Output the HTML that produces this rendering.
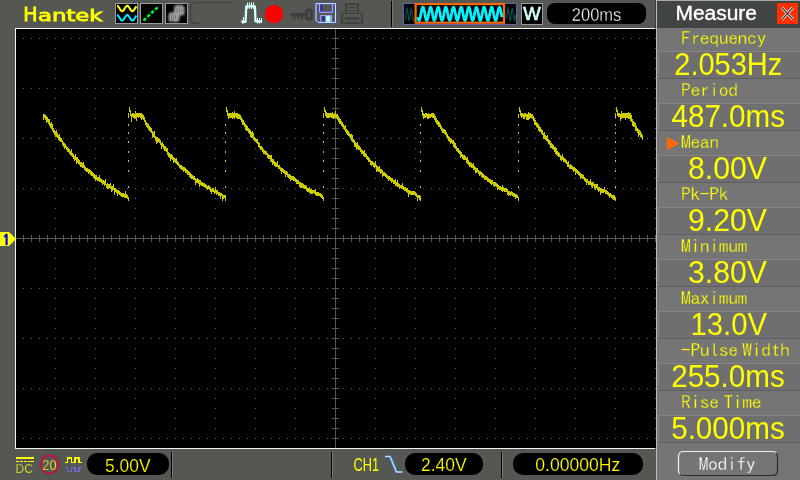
<!DOCTYPE html>
<html><head><meta charset="utf-8"><title>Hantek Measure</title>
<style>html,body{margin:0;padding:0;background:#555753;width:800px;height:480px;overflow:hidden}svg{display:block}.v{font-family:"Liberation Sans",Arial,sans-serif;fill:#ffff00}.l{font-family:"IPAGothic","WenQuanYi Zen Hei Mono","Liberation Mono",monospace;fill:#ffff00}</style></head><body>
<svg width="800" height="480" viewBox="0 0 800 480">
<rect x="0" y="0" width="800" height="480" fill="#555753"/>
<g shape-rendering="crispEdges">
<rect x="15" y="28" width="640" height="421" fill="#f0f2ef"/><rect x="655" y="0" width="1" height="28" fill="#3a3c39"/>
<rect x="16" y="29" width="640" height="419" fill="#000"/>
<path d="M23 38h1v1h-1zM23 88h1v1h-1zM23 138h1v1h-1zM23 188h1v1h-1zM23 288h1v1h-1zM23 338h1v1h-1zM23 388h1v1h-1zM23 438h1v1h-1zM31 38h1v1h-1zM31 88h1v1h-1zM31 138h1v1h-1zM31 188h1v1h-1zM31 288h1v1h-1zM31 338h1v1h-1zM31 388h1v1h-1zM31 438h1v1h-1zM39 38h1v1h-1zM39 88h1v1h-1zM39 138h1v1h-1zM39 188h1v1h-1zM39 288h1v1h-1zM39 338h1v1h-1zM39 388h1v1h-1zM39 438h1v1h-1zM47 38h1v1h-1zM47 88h1v1h-1zM47 138h1v1h-1zM47 188h1v1h-1zM47 288h1v1h-1zM47 338h1v1h-1zM47 388h1v1h-1zM47 438h1v1h-1zM55 38h1v1h-1zM55 48h1v1h-1zM55 58h1v1h-1zM55 68h1v1h-1zM55 78h1v1h-1zM55 88h1v1h-1zM55 98h1v1h-1zM55 108h1v1h-1zM55 118h1v1h-1zM55 128h1v1h-1zM55 138h1v1h-1zM55 148h1v1h-1zM55 158h1v1h-1zM55 168h1v1h-1zM55 178h1v1h-1zM55 188h1v1h-1zM55 198h1v1h-1zM55 208h1v1h-1zM55 218h1v1h-1zM55 228h1v1h-1zM55 238h1v1h-1zM55 248h1v1h-1zM55 258h1v1h-1zM55 268h1v1h-1zM55 278h1v1h-1zM55 288h1v1h-1zM55 298h1v1h-1zM55 308h1v1h-1zM55 318h1v1h-1zM55 328h1v1h-1zM55 338h1v1h-1zM55 348h1v1h-1zM55 358h1v1h-1zM55 368h1v1h-1zM55 378h1v1h-1zM55 388h1v1h-1zM55 398h1v1h-1zM55 408h1v1h-1zM55 418h1v1h-1zM55 428h1v1h-1zM55 438h1v1h-1zM63 38h1v1h-1zM63 88h1v1h-1zM63 138h1v1h-1zM63 188h1v1h-1zM63 288h1v1h-1zM63 338h1v1h-1zM63 388h1v1h-1zM63 438h1v1h-1zM71 38h1v1h-1zM71 88h1v1h-1zM71 138h1v1h-1zM71 188h1v1h-1zM71 288h1v1h-1zM71 338h1v1h-1zM71 388h1v1h-1zM71 438h1v1h-1zM79 38h1v1h-1zM79 88h1v1h-1zM79 138h1v1h-1zM79 188h1v1h-1zM79 288h1v1h-1zM79 338h1v1h-1zM79 388h1v1h-1zM79 438h1v1h-1zM87 38h1v1h-1zM87 88h1v1h-1zM87 138h1v1h-1zM87 188h1v1h-1zM87 288h1v1h-1zM87 338h1v1h-1zM87 388h1v1h-1zM87 438h1v1h-1zM95 38h1v1h-1zM95 48h1v1h-1zM95 58h1v1h-1zM95 68h1v1h-1zM95 78h1v1h-1zM95 88h1v1h-1zM95 98h1v1h-1zM95 108h1v1h-1zM95 118h1v1h-1zM95 128h1v1h-1zM95 138h1v1h-1zM95 148h1v1h-1zM95 158h1v1h-1zM95 168h1v1h-1zM95 178h1v1h-1zM95 188h1v1h-1zM95 198h1v1h-1zM95 208h1v1h-1zM95 218h1v1h-1zM95 228h1v1h-1zM95 238h1v1h-1zM95 248h1v1h-1zM95 258h1v1h-1zM95 268h1v1h-1zM95 278h1v1h-1zM95 288h1v1h-1zM95 298h1v1h-1zM95 308h1v1h-1zM95 318h1v1h-1zM95 328h1v1h-1zM95 338h1v1h-1zM95 348h1v1h-1zM95 358h1v1h-1zM95 368h1v1h-1zM95 378h1v1h-1zM95 388h1v1h-1zM95 398h1v1h-1zM95 408h1v1h-1zM95 418h1v1h-1zM95 428h1v1h-1zM95 438h1v1h-1zM103 38h1v1h-1zM103 88h1v1h-1zM103 138h1v1h-1zM103 188h1v1h-1zM103 288h1v1h-1zM103 338h1v1h-1zM103 388h1v1h-1zM103 438h1v1h-1zM111 38h1v1h-1zM111 88h1v1h-1zM111 138h1v1h-1zM111 188h1v1h-1zM111 288h1v1h-1zM111 338h1v1h-1zM111 388h1v1h-1zM111 438h1v1h-1zM119 38h1v1h-1zM119 88h1v1h-1zM119 138h1v1h-1zM119 188h1v1h-1zM119 288h1v1h-1zM119 338h1v1h-1zM119 388h1v1h-1zM119 438h1v1h-1zM127 38h1v1h-1zM127 88h1v1h-1zM127 138h1v1h-1zM127 188h1v1h-1zM127 288h1v1h-1zM127 338h1v1h-1zM127 388h1v1h-1zM127 438h1v1h-1zM135 38h1v1h-1zM135 48h1v1h-1zM135 58h1v1h-1zM135 68h1v1h-1zM135 78h1v1h-1zM135 88h1v1h-1zM135 98h1v1h-1zM135 108h1v1h-1zM135 118h1v1h-1zM135 128h1v1h-1zM135 138h1v1h-1zM135 148h1v1h-1zM135 158h1v1h-1zM135 168h1v1h-1zM135 178h1v1h-1zM135 188h1v1h-1zM135 198h1v1h-1zM135 208h1v1h-1zM135 218h1v1h-1zM135 228h1v1h-1zM135 238h1v1h-1zM135 248h1v1h-1zM135 258h1v1h-1zM135 268h1v1h-1zM135 278h1v1h-1zM135 288h1v1h-1zM135 298h1v1h-1zM135 308h1v1h-1zM135 318h1v1h-1zM135 328h1v1h-1zM135 338h1v1h-1zM135 348h1v1h-1zM135 358h1v1h-1zM135 368h1v1h-1zM135 378h1v1h-1zM135 388h1v1h-1zM135 398h1v1h-1zM135 408h1v1h-1zM135 418h1v1h-1zM135 428h1v1h-1zM135 438h1v1h-1zM143 38h1v1h-1zM143 88h1v1h-1zM143 138h1v1h-1zM143 188h1v1h-1zM143 288h1v1h-1zM143 338h1v1h-1zM143 388h1v1h-1zM143 438h1v1h-1zM151 38h1v1h-1zM151 88h1v1h-1zM151 138h1v1h-1zM151 188h1v1h-1zM151 288h1v1h-1zM151 338h1v1h-1zM151 388h1v1h-1zM151 438h1v1h-1zM159 38h1v1h-1zM159 88h1v1h-1zM159 138h1v1h-1zM159 188h1v1h-1zM159 288h1v1h-1zM159 338h1v1h-1zM159 388h1v1h-1zM159 438h1v1h-1zM167 38h1v1h-1zM167 88h1v1h-1zM167 138h1v1h-1zM167 188h1v1h-1zM167 288h1v1h-1zM167 338h1v1h-1zM167 388h1v1h-1zM167 438h1v1h-1zM175 38h1v1h-1zM175 48h1v1h-1zM175 58h1v1h-1zM175 68h1v1h-1zM175 78h1v1h-1zM175 88h1v1h-1zM175 98h1v1h-1zM175 108h1v1h-1zM175 118h1v1h-1zM175 128h1v1h-1zM175 138h1v1h-1zM175 148h1v1h-1zM175 158h1v1h-1zM175 168h1v1h-1zM175 178h1v1h-1zM175 188h1v1h-1zM175 198h1v1h-1zM175 208h1v1h-1zM175 218h1v1h-1zM175 228h1v1h-1zM175 238h1v1h-1zM175 248h1v1h-1zM175 258h1v1h-1zM175 268h1v1h-1zM175 278h1v1h-1zM175 288h1v1h-1zM175 298h1v1h-1zM175 308h1v1h-1zM175 318h1v1h-1zM175 328h1v1h-1zM175 338h1v1h-1zM175 348h1v1h-1zM175 358h1v1h-1zM175 368h1v1h-1zM175 378h1v1h-1zM175 388h1v1h-1zM175 398h1v1h-1zM175 408h1v1h-1zM175 418h1v1h-1zM175 428h1v1h-1zM175 438h1v1h-1zM183 38h1v1h-1zM183 88h1v1h-1zM183 138h1v1h-1zM183 188h1v1h-1zM183 288h1v1h-1zM183 338h1v1h-1zM183 388h1v1h-1zM183 438h1v1h-1zM191 38h1v1h-1zM191 88h1v1h-1zM191 138h1v1h-1zM191 188h1v1h-1zM191 288h1v1h-1zM191 338h1v1h-1zM191 388h1v1h-1zM191 438h1v1h-1zM199 38h1v1h-1zM199 88h1v1h-1zM199 138h1v1h-1zM199 188h1v1h-1zM199 288h1v1h-1zM199 338h1v1h-1zM199 388h1v1h-1zM199 438h1v1h-1zM207 38h1v1h-1zM207 88h1v1h-1zM207 138h1v1h-1zM207 188h1v1h-1zM207 288h1v1h-1zM207 338h1v1h-1zM207 388h1v1h-1zM207 438h1v1h-1zM215 38h1v1h-1zM215 48h1v1h-1zM215 58h1v1h-1zM215 68h1v1h-1zM215 78h1v1h-1zM215 88h1v1h-1zM215 98h1v1h-1zM215 108h1v1h-1zM215 118h1v1h-1zM215 128h1v1h-1zM215 138h1v1h-1zM215 148h1v1h-1zM215 158h1v1h-1zM215 168h1v1h-1zM215 178h1v1h-1zM215 188h1v1h-1zM215 198h1v1h-1zM215 208h1v1h-1zM215 218h1v1h-1zM215 228h1v1h-1zM215 238h1v1h-1zM215 248h1v1h-1zM215 258h1v1h-1zM215 268h1v1h-1zM215 278h1v1h-1zM215 288h1v1h-1zM215 298h1v1h-1zM215 308h1v1h-1zM215 318h1v1h-1zM215 328h1v1h-1zM215 338h1v1h-1zM215 348h1v1h-1zM215 358h1v1h-1zM215 368h1v1h-1zM215 378h1v1h-1zM215 388h1v1h-1zM215 398h1v1h-1zM215 408h1v1h-1zM215 418h1v1h-1zM215 428h1v1h-1zM215 438h1v1h-1zM223 38h1v1h-1zM223 88h1v1h-1zM223 138h1v1h-1zM223 188h1v1h-1zM223 288h1v1h-1zM223 338h1v1h-1zM223 388h1v1h-1zM223 438h1v1h-1zM231 38h1v1h-1zM231 88h1v1h-1zM231 138h1v1h-1zM231 188h1v1h-1zM231 288h1v1h-1zM231 338h1v1h-1zM231 388h1v1h-1zM231 438h1v1h-1zM239 38h1v1h-1zM239 88h1v1h-1zM239 138h1v1h-1zM239 188h1v1h-1zM239 288h1v1h-1zM239 338h1v1h-1zM239 388h1v1h-1zM239 438h1v1h-1zM247 38h1v1h-1zM247 88h1v1h-1zM247 138h1v1h-1zM247 188h1v1h-1zM247 288h1v1h-1zM247 338h1v1h-1zM247 388h1v1h-1zM247 438h1v1h-1zM255 38h1v1h-1zM255 48h1v1h-1zM255 58h1v1h-1zM255 68h1v1h-1zM255 78h1v1h-1zM255 88h1v1h-1zM255 98h1v1h-1zM255 108h1v1h-1zM255 118h1v1h-1zM255 128h1v1h-1zM255 138h1v1h-1zM255 148h1v1h-1zM255 158h1v1h-1zM255 168h1v1h-1zM255 178h1v1h-1zM255 188h1v1h-1zM255 198h1v1h-1zM255 208h1v1h-1zM255 218h1v1h-1zM255 228h1v1h-1zM255 238h1v1h-1zM255 248h1v1h-1zM255 258h1v1h-1zM255 268h1v1h-1zM255 278h1v1h-1zM255 288h1v1h-1zM255 298h1v1h-1zM255 308h1v1h-1zM255 318h1v1h-1zM255 328h1v1h-1zM255 338h1v1h-1zM255 348h1v1h-1zM255 358h1v1h-1zM255 368h1v1h-1zM255 378h1v1h-1zM255 388h1v1h-1zM255 398h1v1h-1zM255 408h1v1h-1zM255 418h1v1h-1zM255 428h1v1h-1zM255 438h1v1h-1zM263 38h1v1h-1zM263 88h1v1h-1zM263 138h1v1h-1zM263 188h1v1h-1zM263 288h1v1h-1zM263 338h1v1h-1zM263 388h1v1h-1zM263 438h1v1h-1zM271 38h1v1h-1zM271 88h1v1h-1zM271 138h1v1h-1zM271 188h1v1h-1zM271 288h1v1h-1zM271 338h1v1h-1zM271 388h1v1h-1zM271 438h1v1h-1zM279 38h1v1h-1zM279 88h1v1h-1zM279 138h1v1h-1zM279 188h1v1h-1zM279 288h1v1h-1zM279 338h1v1h-1zM279 388h1v1h-1zM279 438h1v1h-1zM287 38h1v1h-1zM287 88h1v1h-1zM287 138h1v1h-1zM287 188h1v1h-1zM287 288h1v1h-1zM287 338h1v1h-1zM287 388h1v1h-1zM287 438h1v1h-1zM295 38h1v1h-1zM295 48h1v1h-1zM295 58h1v1h-1zM295 68h1v1h-1zM295 78h1v1h-1zM295 88h1v1h-1zM295 98h1v1h-1zM295 108h1v1h-1zM295 118h1v1h-1zM295 128h1v1h-1zM295 138h1v1h-1zM295 148h1v1h-1zM295 158h1v1h-1zM295 168h1v1h-1zM295 178h1v1h-1zM295 188h1v1h-1zM295 198h1v1h-1zM295 208h1v1h-1zM295 218h1v1h-1zM295 228h1v1h-1zM295 238h1v1h-1zM295 248h1v1h-1zM295 258h1v1h-1zM295 268h1v1h-1zM295 278h1v1h-1zM295 288h1v1h-1zM295 298h1v1h-1zM295 308h1v1h-1zM295 318h1v1h-1zM295 328h1v1h-1zM295 338h1v1h-1zM295 348h1v1h-1zM295 358h1v1h-1zM295 368h1v1h-1zM295 378h1v1h-1zM295 388h1v1h-1zM295 398h1v1h-1zM295 408h1v1h-1zM295 418h1v1h-1zM295 428h1v1h-1zM295 438h1v1h-1zM303 38h1v1h-1zM303 88h1v1h-1zM303 138h1v1h-1zM303 188h1v1h-1zM303 288h1v1h-1zM303 338h1v1h-1zM303 388h1v1h-1zM303 438h1v1h-1zM311 38h1v1h-1zM311 88h1v1h-1zM311 138h1v1h-1zM311 188h1v1h-1zM311 288h1v1h-1zM311 338h1v1h-1zM311 388h1v1h-1zM311 438h1v1h-1zM319 38h1v1h-1zM319 88h1v1h-1zM319 138h1v1h-1zM319 188h1v1h-1zM319 288h1v1h-1zM319 338h1v1h-1zM319 388h1v1h-1zM319 438h1v1h-1zM327 38h1v1h-1zM327 88h1v1h-1zM327 138h1v1h-1zM327 188h1v1h-1zM327 288h1v1h-1zM327 338h1v1h-1zM327 388h1v1h-1zM327 438h1v1h-1zM335 38h1v1h-1zM335 88h1v1h-1zM335 138h1v1h-1zM335 188h1v1h-1zM335 288h1v1h-1zM335 338h1v1h-1zM335 388h1v1h-1zM335 438h1v1h-1zM343 38h1v1h-1zM343 88h1v1h-1zM343 138h1v1h-1zM343 188h1v1h-1zM343 288h1v1h-1zM343 338h1v1h-1zM343 388h1v1h-1zM343 438h1v1h-1zM351 38h1v1h-1zM351 88h1v1h-1zM351 138h1v1h-1zM351 188h1v1h-1zM351 288h1v1h-1zM351 338h1v1h-1zM351 388h1v1h-1zM351 438h1v1h-1zM359 38h1v1h-1zM359 88h1v1h-1zM359 138h1v1h-1zM359 188h1v1h-1zM359 288h1v1h-1zM359 338h1v1h-1zM359 388h1v1h-1zM359 438h1v1h-1zM367 38h1v1h-1zM367 88h1v1h-1zM367 138h1v1h-1zM367 188h1v1h-1zM367 288h1v1h-1zM367 338h1v1h-1zM367 388h1v1h-1zM367 438h1v1h-1zM375 38h1v1h-1zM375 48h1v1h-1zM375 58h1v1h-1zM375 68h1v1h-1zM375 78h1v1h-1zM375 88h1v1h-1zM375 98h1v1h-1zM375 108h1v1h-1zM375 118h1v1h-1zM375 128h1v1h-1zM375 138h1v1h-1zM375 148h1v1h-1zM375 158h1v1h-1zM375 168h1v1h-1zM375 178h1v1h-1zM375 188h1v1h-1zM375 198h1v1h-1zM375 208h1v1h-1zM375 218h1v1h-1zM375 228h1v1h-1zM375 238h1v1h-1zM375 248h1v1h-1zM375 258h1v1h-1zM375 268h1v1h-1zM375 278h1v1h-1zM375 288h1v1h-1zM375 298h1v1h-1zM375 308h1v1h-1zM375 318h1v1h-1zM375 328h1v1h-1zM375 338h1v1h-1zM375 348h1v1h-1zM375 358h1v1h-1zM375 368h1v1h-1zM375 378h1v1h-1zM375 388h1v1h-1zM375 398h1v1h-1zM375 408h1v1h-1zM375 418h1v1h-1zM375 428h1v1h-1zM375 438h1v1h-1zM383 38h1v1h-1zM383 88h1v1h-1zM383 138h1v1h-1zM383 188h1v1h-1zM383 288h1v1h-1zM383 338h1v1h-1zM383 388h1v1h-1zM383 438h1v1h-1zM391 38h1v1h-1zM391 88h1v1h-1zM391 138h1v1h-1zM391 188h1v1h-1zM391 288h1v1h-1zM391 338h1v1h-1zM391 388h1v1h-1zM391 438h1v1h-1zM399 38h1v1h-1zM399 88h1v1h-1zM399 138h1v1h-1zM399 188h1v1h-1zM399 288h1v1h-1zM399 338h1v1h-1zM399 388h1v1h-1zM399 438h1v1h-1zM407 38h1v1h-1zM407 88h1v1h-1zM407 138h1v1h-1zM407 188h1v1h-1zM407 288h1v1h-1zM407 338h1v1h-1zM407 388h1v1h-1zM407 438h1v1h-1zM415 38h1v1h-1zM415 48h1v1h-1zM415 58h1v1h-1zM415 68h1v1h-1zM415 78h1v1h-1zM415 88h1v1h-1zM415 98h1v1h-1zM415 108h1v1h-1zM415 118h1v1h-1zM415 128h1v1h-1zM415 138h1v1h-1zM415 148h1v1h-1zM415 158h1v1h-1zM415 168h1v1h-1zM415 178h1v1h-1zM415 188h1v1h-1zM415 198h1v1h-1zM415 208h1v1h-1zM415 218h1v1h-1zM415 228h1v1h-1zM415 238h1v1h-1zM415 248h1v1h-1zM415 258h1v1h-1zM415 268h1v1h-1zM415 278h1v1h-1zM415 288h1v1h-1zM415 298h1v1h-1zM415 308h1v1h-1zM415 318h1v1h-1zM415 328h1v1h-1zM415 338h1v1h-1zM415 348h1v1h-1zM415 358h1v1h-1zM415 368h1v1h-1zM415 378h1v1h-1zM415 388h1v1h-1zM415 398h1v1h-1zM415 408h1v1h-1zM415 418h1v1h-1zM415 428h1v1h-1zM415 438h1v1h-1zM423 38h1v1h-1zM423 88h1v1h-1zM423 138h1v1h-1zM423 188h1v1h-1zM423 288h1v1h-1zM423 338h1v1h-1zM423 388h1v1h-1zM423 438h1v1h-1zM431 38h1v1h-1zM431 88h1v1h-1zM431 138h1v1h-1zM431 188h1v1h-1zM431 288h1v1h-1zM431 338h1v1h-1zM431 388h1v1h-1zM431 438h1v1h-1zM439 38h1v1h-1zM439 88h1v1h-1zM439 138h1v1h-1zM439 188h1v1h-1zM439 288h1v1h-1zM439 338h1v1h-1zM439 388h1v1h-1zM439 438h1v1h-1zM447 38h1v1h-1zM447 88h1v1h-1zM447 138h1v1h-1zM447 188h1v1h-1zM447 288h1v1h-1zM447 338h1v1h-1zM447 388h1v1h-1zM447 438h1v1h-1zM455 38h1v1h-1zM455 48h1v1h-1zM455 58h1v1h-1zM455 68h1v1h-1zM455 78h1v1h-1zM455 88h1v1h-1zM455 98h1v1h-1zM455 108h1v1h-1zM455 118h1v1h-1zM455 128h1v1h-1zM455 138h1v1h-1zM455 148h1v1h-1zM455 158h1v1h-1zM455 168h1v1h-1zM455 178h1v1h-1zM455 188h1v1h-1zM455 198h1v1h-1zM455 208h1v1h-1zM455 218h1v1h-1zM455 228h1v1h-1zM455 238h1v1h-1zM455 248h1v1h-1zM455 258h1v1h-1zM455 268h1v1h-1zM455 278h1v1h-1zM455 288h1v1h-1zM455 298h1v1h-1zM455 308h1v1h-1zM455 318h1v1h-1zM455 328h1v1h-1zM455 338h1v1h-1zM455 348h1v1h-1zM455 358h1v1h-1zM455 368h1v1h-1zM455 378h1v1h-1zM455 388h1v1h-1zM455 398h1v1h-1zM455 408h1v1h-1zM455 418h1v1h-1zM455 428h1v1h-1zM455 438h1v1h-1zM463 38h1v1h-1zM463 88h1v1h-1zM463 138h1v1h-1zM463 188h1v1h-1zM463 288h1v1h-1zM463 338h1v1h-1zM463 388h1v1h-1zM463 438h1v1h-1zM471 38h1v1h-1zM471 88h1v1h-1zM471 138h1v1h-1zM471 188h1v1h-1zM471 288h1v1h-1zM471 338h1v1h-1zM471 388h1v1h-1zM471 438h1v1h-1zM479 38h1v1h-1zM479 88h1v1h-1zM479 138h1v1h-1zM479 188h1v1h-1zM479 288h1v1h-1zM479 338h1v1h-1zM479 388h1v1h-1zM479 438h1v1h-1zM487 38h1v1h-1zM487 88h1v1h-1zM487 138h1v1h-1zM487 188h1v1h-1zM487 288h1v1h-1zM487 338h1v1h-1zM487 388h1v1h-1zM487 438h1v1h-1zM495 38h1v1h-1zM495 48h1v1h-1zM495 58h1v1h-1zM495 68h1v1h-1zM495 78h1v1h-1zM495 88h1v1h-1zM495 98h1v1h-1zM495 108h1v1h-1zM495 118h1v1h-1zM495 128h1v1h-1zM495 138h1v1h-1zM495 148h1v1h-1zM495 158h1v1h-1zM495 168h1v1h-1zM495 178h1v1h-1zM495 188h1v1h-1zM495 198h1v1h-1zM495 208h1v1h-1zM495 218h1v1h-1zM495 228h1v1h-1zM495 238h1v1h-1zM495 248h1v1h-1zM495 258h1v1h-1zM495 268h1v1h-1zM495 278h1v1h-1zM495 288h1v1h-1zM495 298h1v1h-1zM495 308h1v1h-1zM495 318h1v1h-1zM495 328h1v1h-1zM495 338h1v1h-1zM495 348h1v1h-1zM495 358h1v1h-1zM495 368h1v1h-1zM495 378h1v1h-1zM495 388h1v1h-1zM495 398h1v1h-1zM495 408h1v1h-1zM495 418h1v1h-1zM495 428h1v1h-1zM495 438h1v1h-1zM503 38h1v1h-1zM503 88h1v1h-1zM503 138h1v1h-1zM503 188h1v1h-1zM503 288h1v1h-1zM503 338h1v1h-1zM503 388h1v1h-1zM503 438h1v1h-1zM511 38h1v1h-1zM511 88h1v1h-1zM511 138h1v1h-1zM511 188h1v1h-1zM511 288h1v1h-1zM511 338h1v1h-1zM511 388h1v1h-1zM511 438h1v1h-1zM519 38h1v1h-1zM519 88h1v1h-1zM519 138h1v1h-1zM519 188h1v1h-1zM519 288h1v1h-1zM519 338h1v1h-1zM519 388h1v1h-1zM519 438h1v1h-1zM527 38h1v1h-1zM527 88h1v1h-1zM527 138h1v1h-1zM527 188h1v1h-1zM527 288h1v1h-1zM527 338h1v1h-1zM527 388h1v1h-1zM527 438h1v1h-1zM535 38h1v1h-1zM535 48h1v1h-1zM535 58h1v1h-1zM535 68h1v1h-1zM535 78h1v1h-1zM535 88h1v1h-1zM535 98h1v1h-1zM535 108h1v1h-1zM535 118h1v1h-1zM535 128h1v1h-1zM535 138h1v1h-1zM535 148h1v1h-1zM535 158h1v1h-1zM535 168h1v1h-1zM535 178h1v1h-1zM535 188h1v1h-1zM535 198h1v1h-1zM535 208h1v1h-1zM535 218h1v1h-1zM535 228h1v1h-1zM535 238h1v1h-1zM535 248h1v1h-1zM535 258h1v1h-1zM535 268h1v1h-1zM535 278h1v1h-1zM535 288h1v1h-1zM535 298h1v1h-1zM535 308h1v1h-1zM535 318h1v1h-1zM535 328h1v1h-1zM535 338h1v1h-1zM535 348h1v1h-1zM535 358h1v1h-1zM535 368h1v1h-1zM535 378h1v1h-1zM535 388h1v1h-1zM535 398h1v1h-1zM535 408h1v1h-1zM535 418h1v1h-1zM535 428h1v1h-1zM535 438h1v1h-1zM543 38h1v1h-1zM543 88h1v1h-1zM543 138h1v1h-1zM543 188h1v1h-1zM543 288h1v1h-1zM543 338h1v1h-1zM543 388h1v1h-1zM543 438h1v1h-1zM551 38h1v1h-1zM551 88h1v1h-1zM551 138h1v1h-1zM551 188h1v1h-1zM551 288h1v1h-1zM551 338h1v1h-1zM551 388h1v1h-1zM551 438h1v1h-1zM559 38h1v1h-1zM559 88h1v1h-1zM559 138h1v1h-1zM559 188h1v1h-1zM559 288h1v1h-1zM559 338h1v1h-1zM559 388h1v1h-1zM559 438h1v1h-1zM567 38h1v1h-1zM567 88h1v1h-1zM567 138h1v1h-1zM567 188h1v1h-1zM567 288h1v1h-1zM567 338h1v1h-1zM567 388h1v1h-1zM567 438h1v1h-1zM575 38h1v1h-1zM575 48h1v1h-1zM575 58h1v1h-1zM575 68h1v1h-1zM575 78h1v1h-1zM575 88h1v1h-1zM575 98h1v1h-1zM575 108h1v1h-1zM575 118h1v1h-1zM575 128h1v1h-1zM575 138h1v1h-1zM575 148h1v1h-1zM575 158h1v1h-1zM575 168h1v1h-1zM575 178h1v1h-1zM575 188h1v1h-1zM575 198h1v1h-1zM575 208h1v1h-1zM575 218h1v1h-1zM575 228h1v1h-1zM575 238h1v1h-1zM575 248h1v1h-1zM575 258h1v1h-1zM575 268h1v1h-1zM575 278h1v1h-1zM575 288h1v1h-1zM575 298h1v1h-1zM575 308h1v1h-1zM575 318h1v1h-1zM575 328h1v1h-1zM575 338h1v1h-1zM575 348h1v1h-1zM575 358h1v1h-1zM575 368h1v1h-1zM575 378h1v1h-1zM575 388h1v1h-1zM575 398h1v1h-1zM575 408h1v1h-1zM575 418h1v1h-1zM575 428h1v1h-1zM575 438h1v1h-1zM583 38h1v1h-1zM583 88h1v1h-1zM583 138h1v1h-1zM583 188h1v1h-1zM583 288h1v1h-1zM583 338h1v1h-1zM583 388h1v1h-1zM583 438h1v1h-1zM591 38h1v1h-1zM591 88h1v1h-1zM591 138h1v1h-1zM591 188h1v1h-1zM591 288h1v1h-1zM591 338h1v1h-1zM591 388h1v1h-1zM591 438h1v1h-1zM599 38h1v1h-1zM599 88h1v1h-1zM599 138h1v1h-1zM599 188h1v1h-1zM599 288h1v1h-1zM599 338h1v1h-1zM599 388h1v1h-1zM599 438h1v1h-1zM607 38h1v1h-1zM607 88h1v1h-1zM607 138h1v1h-1zM607 188h1v1h-1zM607 288h1v1h-1zM607 338h1v1h-1zM607 388h1v1h-1zM607 438h1v1h-1zM615 38h1v1h-1zM615 48h1v1h-1zM615 58h1v1h-1zM615 68h1v1h-1zM615 78h1v1h-1zM615 88h1v1h-1zM615 98h1v1h-1zM615 108h1v1h-1zM615 118h1v1h-1zM615 128h1v1h-1zM615 138h1v1h-1zM615 148h1v1h-1zM615 158h1v1h-1zM615 168h1v1h-1zM615 178h1v1h-1zM615 188h1v1h-1zM615 198h1v1h-1zM615 208h1v1h-1zM615 218h1v1h-1zM615 228h1v1h-1zM615 238h1v1h-1zM615 248h1v1h-1zM615 258h1v1h-1zM615 268h1v1h-1zM615 278h1v1h-1zM615 288h1v1h-1zM615 298h1v1h-1zM615 308h1v1h-1zM615 318h1v1h-1zM615 328h1v1h-1zM615 338h1v1h-1zM615 348h1v1h-1zM615 358h1v1h-1zM615 368h1v1h-1zM615 378h1v1h-1zM615 388h1v1h-1zM615 398h1v1h-1zM615 408h1v1h-1zM615 418h1v1h-1zM615 428h1v1h-1zM615 438h1v1h-1zM623 38h1v1h-1zM623 88h1v1h-1zM623 138h1v1h-1zM623 188h1v1h-1zM623 288h1v1h-1zM623 338h1v1h-1zM623 388h1v1h-1zM623 438h1v1h-1zM631 38h1v1h-1zM631 88h1v1h-1zM631 138h1v1h-1zM631 188h1v1h-1zM631 288h1v1h-1zM631 338h1v1h-1zM631 388h1v1h-1zM631 438h1v1h-1zM639 38h1v1h-1zM639 88h1v1h-1zM639 138h1v1h-1zM639 188h1v1h-1zM639 288h1v1h-1zM639 338h1v1h-1zM639 388h1v1h-1zM639 438h1v1h-1zM647 38h1v1h-1zM647 88h1v1h-1zM647 138h1v1h-1zM647 188h1v1h-1zM647 288h1v1h-1zM647 338h1v1h-1zM647 388h1v1h-1zM647 438h1v1h-1zM655 38h1v1h-1zM655 48h1v1h-1zM655 58h1v1h-1zM655 68h1v1h-1zM655 78h1v1h-1zM655 88h1v1h-1zM655 98h1v1h-1zM655 108h1v1h-1zM655 118h1v1h-1zM655 128h1v1h-1zM655 138h1v1h-1zM655 148h1v1h-1zM655 158h1v1h-1zM655 168h1v1h-1zM655 178h1v1h-1zM655 188h1v1h-1zM655 198h1v1h-1zM655 208h1v1h-1zM655 218h1v1h-1zM655 228h1v1h-1zM655 238h1v1h-1zM655 248h1v1h-1zM655 258h1v1h-1zM655 268h1v1h-1zM655 278h1v1h-1zM655 288h1v1h-1zM655 298h1v1h-1zM655 308h1v1h-1zM655 318h1v1h-1zM655 328h1v1h-1zM655 338h1v1h-1zM655 348h1v1h-1zM655 358h1v1h-1zM655 368h1v1h-1zM655 378h1v1h-1zM655 388h1v1h-1zM655 398h1v1h-1zM655 408h1v1h-1zM655 418h1v1h-1zM655 428h1v1h-1zM655 438h1v1h-1z" fill="#606060"/>
<path d="M335 29h1v419h-1zM16 238h640v1h-640zM332 38h7v1h-7zM332 48h7v1h-7zM332 58h7v1h-7zM332 68h7v1h-7zM332 78h7v1h-7zM332 88h7v1h-7zM332 98h7v1h-7zM332 108h7v1h-7zM332 118h7v1h-7zM332 128h7v1h-7zM332 138h7v1h-7zM332 148h7v1h-7zM332 158h7v1h-7zM332 168h7v1h-7zM332 178h7v1h-7zM332 188h7v1h-7zM332 198h7v1h-7zM332 208h7v1h-7zM332 218h7v1h-7zM332 228h7v1h-7zM332 238h7v1h-7zM332 248h7v1h-7zM332 258h7v1h-7zM332 268h7v1h-7zM332 278h7v1h-7zM332 288h7v1h-7zM332 298h7v1h-7zM332 308h7v1h-7zM332 318h7v1h-7zM332 328h7v1h-7zM332 338h7v1h-7zM332 348h7v1h-7zM332 358h7v1h-7zM332 368h7v1h-7zM332 378h7v1h-7zM332 388h7v1h-7zM332 398h7v1h-7zM332 408h7v1h-7zM332 418h7v1h-7zM332 428h7v1h-7zM332 438h7v1h-7zM23 235h1v7h-1zM31 235h1v7h-1zM39 235h1v7h-1zM47 235h1v7h-1zM55 235h1v7h-1zM63 235h1v7h-1zM71 235h1v7h-1zM79 235h1v7h-1zM87 235h1v7h-1zM95 235h1v7h-1zM103 235h1v7h-1zM111 235h1v7h-1zM119 235h1v7h-1zM127 235h1v7h-1zM135 235h1v7h-1zM143 235h1v7h-1zM151 235h1v7h-1zM159 235h1v7h-1zM167 235h1v7h-1zM175 235h1v7h-1zM183 235h1v7h-1zM191 235h1v7h-1zM199 235h1v7h-1zM207 235h1v7h-1zM215 235h1v7h-1zM223 235h1v7h-1zM231 235h1v7h-1zM239 235h1v7h-1zM247 235h1v7h-1zM255 235h1v7h-1zM263 235h1v7h-1zM271 235h1v7h-1zM279 235h1v7h-1zM287 235h1v7h-1zM295 235h1v7h-1zM303 235h1v7h-1zM311 235h1v7h-1zM319 235h1v7h-1zM327 235h1v7h-1zM335 235h1v7h-1zM343 235h1v7h-1zM351 235h1v7h-1zM359 235h1v7h-1zM367 235h1v7h-1zM375 235h1v7h-1zM383 235h1v7h-1zM391 235h1v7h-1zM399 235h1v7h-1zM407 235h1v7h-1zM415 235h1v7h-1zM423 235h1v7h-1zM431 235h1v7h-1zM439 235h1v7h-1zM447 235h1v7h-1zM455 235h1v7h-1zM463 235h1v7h-1zM471 235h1v7h-1zM479 235h1v7h-1zM487 235h1v7h-1zM495 235h1v7h-1zM503 235h1v7h-1zM511 235h1v7h-1zM519 235h1v7h-1zM527 235h1v7h-1zM535 235h1v7h-1zM543 235h1v7h-1zM551 235h1v7h-1zM559 235h1v7h-1zM567 235h1v7h-1zM575 235h1v7h-1zM583 235h1v7h-1zM591 235h1v7h-1zM599 235h1v7h-1zM607 235h1v7h-1zM615 235h1v7h-1zM623 235h1v7h-1zM631 235h1v7h-1zM639 235h1v7h-1zM647 235h1v7h-1zM655 235h1v7h-1z" fill="#555753"/>
<path d="M43 114h1v4h-1zM43 118h1v2h-1zM44 114h1v4h-1zM45 115h1v5h-1zM46 116h1v5h-1zM46 121h1v2h-1zM47 117h1v5h-1zM48 119h1v5h-1zM49 121h1v5h-1zM49 119h1v2h-1zM50 123h1v5h-1zM51 124h1v5h-1zM51 122h1v2h-1zM52 126h1v5h-1zM52 124h1v2h-1zM53 128h1v5h-1zM54 130h1v5h-1zM55 131h1v6h-1zM56 132h1v5h-1zM56 130h1v2h-1zM57 133h1v5h-1zM58 135h1v5h-1zM59 136h1v5h-1zM59 134h1v2h-1zM60 137h1v5h-1zM61 138h1v4h-1zM62 140h1v5h-1zM63 142h1v5h-1zM64 143h1v4h-1zM64 147h1v2h-1zM65 144h1v4h-1zM66 146h1v4h-1zM67 147h1v5h-1zM68 148h1v4h-1zM69 149h1v5h-1zM70 151h1v4h-1zM71 151h1v5h-1zM71 149h1v2h-1zM72 153h1v4h-1zM73 154h1v5h-1zM74 156h1v5h-1zM75 156h1v4h-1zM75 154h1v2h-1zM76 157h1v5h-1zM76 162h1v2h-1zM77 159h1v4h-1zM77 157h1v2h-1zM78 159h1v5h-1zM79 160h1v5h-1zM80 162h1v5h-1zM81 162h1v5h-1zM82 163h1v5h-1zM83 164h1v4h-1zM83 162h1v2h-1zM84 165h1v5h-1zM85 167h1v4h-1zM86 168h1v4h-1zM87 168h1v4h-1zM88 169h1v5h-1zM89 169h1v4h-1zM90 170h1v5h-1zM91 171h1v5h-1zM92 172h1v4h-1zM93 173h1v5h-1zM94 174h1v5h-1zM95 175h1v4h-1zM95 179h1v2h-1zM96 175h1v5h-1zM97 177h1v4h-1zM98 177h1v4h-1zM99 177h1v5h-1zM99 175h1v2h-1zM100 178h1v4h-1zM101 179h1v4h-1zM102 180h1v5h-1zM103 180h1v4h-1zM104 181h1v5h-1zM105 181h1v4h-1zM105 179h1v2h-1zM106 184h1v4h-1zM107 183h1v4h-1zM107 187h1v2h-1zM108 184h1v5h-1zM109 184h1v4h-1zM110 185h1v4h-1zM110 183h1v2h-1zM111 186h1v4h-1zM111 190h1v2h-1zM112 186h1v5h-1zM113 186h1v4h-1zM113 184h1v2h-1zM114 188h1v5h-1zM114 193h1v2h-1zM115 188h1v4h-1zM116 189h1v4h-1zM117 190h1v4h-1zM117 194h1v2h-1zM118 190h1v4h-1zM119 191h1v4h-1zM120 192h1v4h-1zM121 193h1v4h-1zM122 193h1v4h-1zM123 193h1v4h-1zM124 194h1v4h-1zM125 193h1v5h-1zM125 191h1v2h-1zM126 194h1v4h-1zM127 195h1v4h-1zM128 113h1v5h-1zM129 107h1v5h-1zM130 110h1v6h-1zM131 114h1v6h-1zM131 120h1v2h-1zM132 113h1v4h-1zM133 113h1v5h-1zM134 114h1v5h-1zM135 113h1v5h-1zM135 111h1v2h-1zM136 113h1v6h-1zM136 119h1v2h-1zM137 113h1v4h-1zM138 113h1v5h-1zM139 113h1v4h-1zM140 113h1v5h-1zM141 113h1v5h-1zM141 118h1v2h-1zM142 114h1v5h-1zM143 115h1v5h-1zM144 117h1v5h-1zM145 120h1v5h-1zM146 122h1v5h-1zM147 123h1v5h-1zM148 124h1v6h-1zM149 126h1v5h-1zM150 127h1v5h-1zM151 128h1v5h-1zM152 131h1v5h-1zM152 136h1v2h-1zM153 132h1v5h-1zM154 133h1v5h-1zM154 131h1v2h-1zM155 136h1v5h-1zM156 137h1v5h-1zM156 142h1v2h-1zM157 137h1v6h-1zM158 138h1v4h-1zM159 139h1v4h-1zM160 140h1v5h-1zM161 143h1v4h-1zM161 147h1v2h-1zM162 142h1v5h-1zM163 144h1v5h-1zM164 146h1v5h-1zM165 146h1v5h-1zM166 148h1v4h-1zM167 150h1v5h-1zM167 148h1v2h-1zM168 152h1v5h-1zM169 153h1v5h-1zM170 154h1v5h-1zM170 159h1v2h-1zM171 154h1v5h-1zM172 155h1v5h-1zM173 157h1v4h-1zM173 161h1v2h-1zM174 158h1v4h-1zM175 159h1v4h-1zM176 160h1v4h-1zM176 158h1v2h-1zM177 161h1v4h-1zM178 162h1v4h-1zM179 164h1v4h-1zM180 165h1v4h-1zM181 165h1v5h-1zM182 166h1v4h-1zM183 167h1v5h-1zM184 167h1v4h-1zM185 168h1v5h-1zM186 169h1v4h-1zM187 170h1v5h-1zM188 171h1v4h-1zM189 172h1v5h-1zM190 173h1v5h-1zM191 174h1v5h-1zM192 175h1v4h-1zM193 176h1v4h-1zM194 176h1v4h-1zM195 178h1v5h-1zM195 183h1v2h-1zM196 179h1v4h-1zM197 178h1v5h-1zM198 179h1v5h-1zM199 180h1v5h-1zM199 185h1v2h-1zM200 180h1v5h-1zM201 182h1v4h-1zM202 182h1v4h-1zM203 183h1v4h-1zM204 183h1v4h-1zM205 184h1v4h-1zM206 185h1v4h-1zM207 186h1v4h-1zM208 185h1v4h-1zM209 186h1v4h-1zM210 187h1v5h-1zM211 189h1v3h-1zM211 192h1v2h-1zM212 188h1v4h-1zM213 188h1v4h-1zM214 190h1v4h-1zM215 189h1v4h-1zM215 187h1v2h-1zM216 190h1v5h-1zM217 190h1v4h-1zM218 192h1v4h-1zM219 192h1v4h-1zM220 193h1v4h-1zM220 197h1v2h-1zM221 193h1v3h-1zM222 194h1v5h-1zM222 199h1v2h-1zM223 195h1v4h-1zM224 195h1v3h-1zM225 195h1v5h-1zM226 107h1v5h-1zM227 110h1v6h-1zM228 113h1v6h-1zM229 113h1v5h-1zM230 113h1v5h-1zM231 113h1v5h-1zM232 114h1v5h-1zM232 112h1v2h-1zM233 113h1v5h-1zM234 113h1v6h-1zM234 111h1v2h-1zM235 113h1v4h-1zM236 113h1v5h-1zM237 113h1v6h-1zM238 114h1v5h-1zM239 114h1v5h-1zM240 115h1v5h-1zM241 117h1v5h-1zM242 119h1v6h-1zM243 120h1v5h-1zM244 122h1v5h-1zM245 124h1v6h-1zM246 125h1v6h-1zM247 126h1v5h-1zM248 128h1v5h-1zM249 129h1v5h-1zM250 130h1v5h-1zM250 135h1v2h-1zM251 132h1v6h-1zM252 133h1v5h-1zM252 131h1v2h-1zM253 135h1v5h-1zM253 133h1v2h-1zM254 137h1v4h-1zM255 138h1v4h-1zM256 139h1v4h-1zM257 139h1v5h-1zM258 142h1v5h-1zM259 143h1v5h-1zM260 146h1v4h-1zM261 146h1v4h-1zM262 147h1v5h-1zM263 149h1v5h-1zM264 150h1v4h-1zM265 151h1v4h-1zM266 151h1v4h-1zM267 153h1v5h-1zM268 154h1v5h-1zM269 155h1v4h-1zM270 157h1v5h-1zM270 155h1v2h-1zM271 157h1v5h-1zM271 155h1v2h-1zM272 159h1v4h-1zM272 163h1v2h-1zM273 159h1v5h-1zM274 161h1v5h-1zM275 162h1v5h-1zM276 163h1v4h-1zM277 163h1v4h-1zM277 161h1v2h-1zM278 165h1v4h-1zM279 165h1v4h-1zM280 167h1v4h-1zM281 168h1v4h-1zM281 172h1v2h-1zM282 168h1v4h-1zM283 169h1v4h-1zM284 170h1v4h-1zM285 171h1v4h-1zM285 175h1v2h-1zM286 171h1v4h-1zM287 172h1v5h-1zM288 174h1v4h-1zM289 174h1v5h-1zM290 175h1v4h-1zM290 179h1v2h-1zM291 176h1v4h-1zM292 176h1v4h-1zM293 176h1v5h-1zM294 177h1v4h-1zM295 178h1v4h-1zM296 179h1v5h-1zM297 180h1v4h-1zM298 180h1v4h-1zM299 182h1v5h-1zM300 182h1v4h-1zM300 186h1v2h-1zM301 183h1v5h-1zM302 183h1v5h-1zM303 184h1v4h-1zM304 185h1v4h-1zM305 185h1v4h-1zM306 186h1v5h-1zM307 188h1v4h-1zM308 188h1v4h-1zM309 189h1v4h-1zM309 187h1v2h-1zM310 189h1v5h-1zM311 189h1v5h-1zM312 190h1v4h-1zM313 190h1v3h-1zM314 190h1v4h-1zM315 191h1v4h-1zM315 189h1v2h-1zM316 192h1v4h-1zM317 192h1v4h-1zM318 192h1v4h-1zM319 193h1v3h-1zM320 193h1v4h-1zM321 194h1v4h-1zM322 195h1v4h-1zM323 113h1v5h-1zM324 107h1v5h-1zM325 110h1v6h-1zM326 114h1v4h-1zM326 112h1v2h-1zM327 113h1v5h-1zM328 113h1v5h-1zM329 113h1v5h-1zM330 113h1v4h-1zM331 113h1v5h-1zM332 114h1v4h-1zM332 112h1v2h-1zM333 114h1v5h-1zM334 113h1v5h-1zM335 113h1v5h-1zM335 111h1v2h-1zM336 114h1v4h-1zM337 114h1v6h-1zM338 116h1v6h-1zM339 118h1v6h-1zM340 119h1v5h-1zM341 121h1v5h-1zM342 122h1v5h-1zM343 124h1v5h-1zM344 126h1v4h-1zM345 127h1v5h-1zM345 125h1v2h-1zM346 129h1v5h-1zM347 130h1v5h-1zM348 131h1v5h-1zM349 133h1v4h-1zM350 134h1v5h-1zM351 136h1v5h-1zM351 134h1v2h-1zM352 137h1v5h-1zM352 135h1v2h-1zM353 139h1v4h-1zM354 140h1v5h-1zM354 145h1v2h-1zM355 142h1v5h-1zM356 143h1v5h-1zM356 148h1v2h-1zM357 144h1v5h-1zM357 142h1v2h-1zM358 145h1v5h-1zM359 146h1v4h-1zM360 147h1v5h-1zM361 149h1v5h-1zM362 150h1v4h-1zM363 151h1v5h-1zM364 152h1v5h-1zM364 150h1v2h-1zM365 153h1v4h-1zM366 154h1v5h-1zM367 156h1v4h-1zM368 157h1v5h-1zM369 158h1v4h-1zM370 160h1v5h-1zM371 161h1v5h-1zM372 161h1v4h-1zM373 162h1v5h-1zM374 163h1v5h-1zM375 163h1v4h-1zM375 161h1v2h-1zM376 165h1v5h-1zM376 170h1v2h-1zM377 166h1v5h-1zM378 167h1v5h-1zM379 168h1v4h-1zM379 166h1v2h-1zM380 169h1v5h-1zM381 169h1v4h-1zM382 170h1v5h-1zM382 175h1v2h-1zM383 172h1v4h-1zM384 172h1v4h-1zM385 173h1v4h-1zM386 174h1v4h-1zM387 175h1v4h-1zM388 176h1v5h-1zM389 176h1v4h-1zM390 177h1v4h-1zM391 178h1v5h-1zM392 178h1v4h-1zM393 180h1v4h-1zM394 180h1v4h-1zM395 181h1v5h-1zM395 179h1v2h-1zM396 182h1v4h-1zM397 182h1v5h-1zM397 180h1v2h-1zM398 183h1v4h-1zM399 184h1v5h-1zM400 185h1v3h-1zM401 185h1v4h-1zM402 185h1v4h-1zM402 183h1v2h-1zM403 186h1v4h-1zM404 187h1v4h-1zM405 187h1v4h-1zM406 188h1v4h-1zM407 188h1v5h-1zM408 190h1v5h-1zM408 195h1v2h-1zM409 190h1v4h-1zM410 191h1v4h-1zM411 191h1v4h-1zM412 191h1v4h-1zM413 191h1v4h-1zM414 191h1v4h-1zM415 192h1v4h-1zM416 193h1v4h-1zM417 195h1v4h-1zM417 199h1v2h-1zM418 195h1v3h-1zM419 195h1v3h-1zM419 198h1v2h-1zM420 196h1v4h-1zM421 107h1v5h-1zM422 110h1v6h-1zM423 113h1v4h-1zM423 117h1v2h-1zM424 114h1v4h-1zM425 113h1v5h-1zM426 113h1v4h-1zM427 114h1v5h-1zM428 113h1v4h-1zM428 117h1v2h-1zM429 114h1v4h-1zM430 114h1v4h-1zM431 113h1v4h-1zM432 113h1v5h-1zM433 113h1v5h-1zM434 114h1v6h-1zM435 116h1v6h-1zM436 118h1v6h-1zM437 120h1v5h-1zM438 121h1v6h-1zM439 122h1v5h-1zM440 124h1v5h-1zM441 126h1v5h-1zM442 128h1v5h-1zM443 129h1v4h-1zM444 129h1v5h-1zM445 130h1v5h-1zM446 132h1v5h-1zM447 134h1v5h-1zM448 136h1v5h-1zM449 137h1v5h-1zM450 138h1v6h-1zM451 139h1v4h-1zM452 140h1v4h-1zM453 142h1v5h-1zM453 140h1v2h-1zM454 144h1v4h-1zM454 142h1v2h-1zM455 145h1v4h-1zM455 143h1v2h-1zM456 146h1v5h-1zM457 148h1v4h-1zM458 148h1v5h-1zM459 150h1v4h-1zM460 151h1v5h-1zM460 156h1v2h-1zM461 152h1v5h-1zM462 154h1v5h-1zM463 155h1v5h-1zM464 155h1v5h-1zM465 156h1v4h-1zM466 158h1v5h-1zM467 159h1v5h-1zM467 157h1v2h-1zM468 160h1v5h-1zM469 162h1v5h-1zM470 162h1v5h-1zM471 163h1v5h-1zM472 164h1v4h-1zM473 165h1v5h-1zM473 163h1v2h-1zM474 166h1v4h-1zM475 167h1v4h-1zM475 171h1v2h-1zM476 168h1v5h-1zM477 168h1v4h-1zM478 170h1v4h-1zM479 171h1v5h-1zM480 171h1v4h-1zM481 172h1v5h-1zM482 173h1v5h-1zM483 174h1v4h-1zM484 175h1v5h-1zM485 176h1v4h-1zM486 176h1v4h-1zM487 177h1v5h-1zM488 178h1v4h-1zM489 179h1v4h-1zM490 179h1v5h-1zM491 180h1v5h-1zM492 180h1v4h-1zM493 182h1v4h-1zM494 182h1v5h-1zM495 182h1v4h-1zM496 183h1v4h-1zM497 184h1v4h-1zM497 188h1v2h-1zM498 185h1v4h-1zM499 186h1v4h-1zM500 186h1v4h-1zM501 187h1v4h-1zM502 187h1v5h-1zM502 185h1v2h-1zM503 187h1v4h-1zM504 188h1v4h-1zM505 188h1v4h-1zM506 188h1v4h-1zM507 189h1v4h-1zM507 193h1v2h-1zM508 191h1v5h-1zM509 191h1v4h-1zM510 192h1v4h-1zM511 191h1v4h-1zM512 192h1v4h-1zM513 193h1v4h-1zM514 193h1v4h-1zM515 194h1v5h-1zM516 194h1v4h-1zM517 195h1v3h-1zM518 114h1v4h-1zM519 107h1v5h-1zM520 110h1v6h-1zM521 113h1v5h-1zM522 113h1v4h-1zM523 114h1v5h-1zM524 113h1v6h-1zM525 113h1v4h-1zM526 114h1v6h-1zM527 114h1v6h-1zM528 114h1v6h-1zM528 112h1v2h-1zM529 113h1v4h-1zM529 117h1v2h-1zM530 113h1v5h-1zM531 114h1v4h-1zM532 114h1v5h-1zM533 116h1v5h-1zM534 118h1v5h-1zM534 123h1v2h-1zM535 120h1v5h-1zM536 122h1v5h-1zM537 123h1v5h-1zM538 124h1v5h-1zM538 129h1v2h-1zM539 126h1v6h-1zM540 127h1v5h-1zM541 129h1v5h-1zM542 130h1v5h-1zM543 133h1v6h-1zM544 134h1v5h-1zM544 132h1v2h-1zM545 135h1v5h-1zM546 136h1v5h-1zM547 137h1v5h-1zM547 135h1v2h-1zM548 139h1v5h-1zM549 140h1v5h-1zM550 141h1v5h-1zM550 146h1v2h-1zM551 143h1v5h-1zM552 144h1v5h-1zM553 145h1v5h-1zM554 147h1v5h-1zM555 149h1v5h-1zM555 147h1v2h-1zM556 150h1v5h-1zM556 148h1v2h-1zM557 151h1v5h-1zM558 152h1v5h-1zM559 153h1v4h-1zM560 155h1v5h-1zM561 156h1v5h-1zM562 156h1v4h-1zM562 154h1v2h-1zM563 157h1v5h-1zM564 158h1v4h-1zM565 159h1v4h-1zM566 160h1v4h-1zM567 162h1v5h-1zM568 163h1v4h-1zM568 161h1v2h-1zM569 165h1v4h-1zM570 164h1v5h-1zM571 165h1v4h-1zM572 166h1v4h-1zM573 167h1v5h-1zM574 167h1v4h-1zM575 168h1v5h-1zM575 173h1v2h-1zM576 169h1v4h-1zM577 170h1v4h-1zM578 171h1v4h-1zM579 172h1v4h-1zM580 173h1v4h-1zM580 177h1v2h-1zM581 174h1v4h-1zM582 174h1v5h-1zM583 175h1v4h-1zM584 177h1v4h-1zM585 178h1v4h-1zM586 179h1v4h-1zM586 183h1v2h-1zM587 179h1v4h-1zM588 181h1v4h-1zM589 181h1v4h-1zM590 181h1v4h-1zM590 179h1v2h-1zM591 182h1v5h-1zM592 182h1v4h-1zM592 186h1v2h-1zM593 182h1v4h-1zM594 184h1v5h-1zM595 184h1v4h-1zM595 188h1v2h-1zM596 184h1v4h-1zM597 186h1v4h-1zM597 184h1v2h-1zM598 187h1v5h-1zM599 187h1v4h-1zM600 188h1v5h-1zM600 193h1v2h-1zM601 188h1v5h-1zM602 189h1v4h-1zM603 189h1v4h-1zM604 189h1v3h-1zM604 187h1v2h-1zM605 190h1v4h-1zM606 190h1v4h-1zM607 191h1v4h-1zM608 192h1v4h-1zM609 193h1v5h-1zM610 193h1v4h-1zM611 194h1v4h-1zM612 195h1v4h-1zM613 195h1v3h-1zM613 198h1v2h-1zM614 195h1v5h-1zM615 113h1v5h-1zM616 107h1v5h-1zM617 110h1v6h-1zM618 113h1v4h-1zM619 113h1v4h-1zM620 114h1v5h-1zM620 119h1v2h-1zM621 113h1v6h-1zM621 111h1v2h-1zM622 113h1v5h-1zM623 113h1v5h-1zM624 113h1v5h-1zM625 113h1v5h-1zM625 118h1v2h-1zM626 113h1v5h-1zM627 113h1v5h-1zM628 114h1v5h-1zM628 112h1v2h-1zM629 113h1v6h-1zM630 115h1v6h-1zM630 113h1v2h-1zM631 117h1v5h-1zM631 115h1v2h-1zM632 119h1v5h-1zM632 124h1v2h-1zM633 121h1v6h-1zM634 122h1v5h-1zM635 123h1v6h-1zM635 129h1v2h-1zM636 126h1v5h-1zM637 128h1v5h-1zM638 129h1v6h-1zM638 135h1v2h-1zM639 130h1v5h-1zM640 131h1v6h-1zM641 133h1v5h-1zM642 135h1v5h-1zM128 124h1v2h-1zM128 132h1v2h-1zM128 141h1v2h-1zM128 151h1v2h-1zM128 160h1v2h-1zM128 170h1v2h-1zM128 186h1v2h-1zM128 197h1v4h-1zM225 124h1v2h-1zM225 132h1v2h-1zM225 141h1v2h-1zM225 151h1v2h-1zM225 160h1v2h-1zM225 170h1v2h-1zM225 186h1v2h-1zM225 197h1v4h-1zM323 124h1v2h-1zM323 132h1v2h-1zM323 141h1v2h-1zM323 151h1v2h-1zM323 160h1v2h-1zM323 170h1v2h-1zM323 186h1v2h-1zM323 197h1v4h-1zM420 124h1v2h-1zM420 132h1v2h-1zM420 141h1v2h-1zM420 151h1v2h-1zM420 160h1v2h-1zM420 170h1v2h-1zM420 186h1v2h-1zM420 197h1v4h-1zM518 124h1v2h-1zM518 132h1v2h-1zM518 141h1v2h-1zM518 151h1v2h-1zM518 160h1v2h-1zM518 170h1v2h-1zM518 186h1v2h-1zM518 197h1v4h-1zM615 124h1v2h-1zM615 132h1v2h-1zM615 141h1v2h-1zM615 151h1v2h-1zM615 160h1v2h-1zM615 170h1v2h-1zM615 186h1v2h-1zM615 197h1v4h-1z" fill="#cccc00"/>
</g>
<path d="M0 232h9l7 7l-7 7h-9z" fill="#ffff00"/>
<rect x="115.5" y="3.5" width="22" height="20" fill="#000" stroke="#9a9a9a" shape-rendering="crispEdges"/>
<rect x="140.5" y="3.5" width="22" height="20" fill="#000" stroke="#9a9a9a" shape-rendering="crispEdges"/>
<rect x="165.5" y="3.5" width="22" height="20" fill="#000" stroke="#9a9a9a" shape-rendering="crispEdges"/>
<path d="M117.0 5.8L117.5 5.9L118.0 6.3L118.5 6.9L119.0 7.6L119.5 8.4L120.0 9.2L120.5 10.0L121.0 10.6L121.5 11.0L122.0 11.2L122.5 11.1L123.0 10.8L123.5 10.3L124.0 9.6L124.5 8.8L125.0 8.0L125.5 7.2L126.0 6.6L126.5 6.1L127.0 5.8L127.5 5.8L128.0 6.1L128.5 6.5L129.0 7.2L129.5 8.0L130.0 8.8L130.5 9.6L131.0 10.3L131.5 10.8L132.0 11.1L132.5 11.2L133.0 11.0L133.5 10.6L134.0 10.0L134.5 9.3L135.0 8.4L135.5 7.6L136.0 6.9L136.5 6.3" fill="none" stroke="#ffff00" stroke-width="2.1"/>
<path d="M117.0 15.1L117.5 15.2L118.0 15.6L118.5 16.2L119.0 16.9L119.5 17.7L120.0 18.5L120.5 19.3L121.0 19.9L121.5 20.3L122.0 20.5L122.5 20.4L123.0 20.1L123.5 19.6L124.0 18.9L124.5 18.1L125.0 17.3L125.5 16.5L126.0 15.9L126.5 15.4L127.0 15.1L127.5 15.1L128.0 15.4L128.5 15.8L129.0 16.5L129.5 17.3L130.0 18.1L130.5 18.9L131.0 19.6L131.5 20.1L132.0 20.4L132.5 20.5L133.0 20.3L133.5 19.9L134.0 19.3L134.5 18.6L135.0 17.7L135.5 16.9L136.0 16.2L136.5 15.6" fill="none" stroke="#00e5ff" stroke-width="2.1"/>
<path d="M143.500 20.500L158 7" fill="none" stroke="#00f52a" stroke-width="2.600" stroke-dasharray="3.400 1.900"/>
<defs><filter id="bl" x="-30%" y="-30%" width="160%" height="160%"><feGaussianBlur stdDeviation="0.9"/></filter></defs>
<g filter="url(#bl)"><path d="M168.500 21.500V14.500q0 -2 2.500 -2h3V8q0 -3 3.500 -3h3.500q3.500 0 3.500 3.500v4.500q0 2.500 -3 2.500h-2v4q0 2.500 -2.500 2.500z" fill="#a0a0a0"/></g>
<path d="M171.500 20v-5M173.500 20v-5M175.500 19v-4M177 13V8M179.500 13V7M182 12V9" stroke="#5a5a5a" stroke-width=".8" fill="none" opacity=".8"/>
<path d="M232 2.5H196q-5.500 0 -5.500 5.500V18q0 5.500 5.500 5.500H200" fill="none" stroke="#3e403d" stroke-width="1.2"/>
<path d="M241.800 21.800H245.600L246.200 6.300H254.900L255.500 21.300H262" fill="none" stroke="#d6ffff" stroke-width="2.3" stroke-linejoin="round"/>
<path d="M247.500 2.500v6.500M249.500 2.500v6.500M251.500 2.500v6.500M253.500 2.500v6.500M243.500 17v6.500M257.500 18v5.500M259.500 18v5.500M261.500 18v5" fill="none" stroke="#d6ffff" stroke-width="1.100"/>
<path d="M241 21.500l1.500 -1.500M241.500 22.500l1 1" fill="none" stroke="#d6ffff" stroke-width="1"/>
<circle cx="274" cy="14" r="9.2" fill="#ff0000"/>
<g fill="#3d403c"><rect x="290" y="13" width="17" height="3.4"/><rect x="293" y="16" width="2.5" height="3.5"/><rect x="297" y="16" width="2.5" height="2.5"/><rect x="300.5" y="16" width="2.5" height="3.5"/><path fill-rule="evenodd" d="M305 11q0 -2.5 4 -2.5t4 2.500v7q0 2.500 -4 2.500t-4 -2.500zM308 12v5h2.200v-5z"/></g>
<g fill="none"><path d="M316 3.600h19.500v18.800h-17.500l-2 -2z" stroke="#5846cc" stroke-width="2"/><path d="M316 3.600h19.500v18.800h-17.500l-2 -2z" stroke="#b4f2ec" stroke-width="1"/><path d="M319.800 4v8h12.400V4" stroke="#5040c0" stroke-width="2"/><path d="M319.600 4v8.300h12.800V4" stroke="#c8d8f8" stroke-width=".8"/><path d="M320.800 22v-6.200h10.600V22" stroke="#5040c0" stroke-width="1.8"/><path d="M320.600 22v-6.500h11V22" stroke="#c0d0f0" stroke-width=".7"/><rect x="325.600" y="16" width="5" height="5.8" fill="#baffff"/><rect x="323" y="16.8" width="1.3" height="4.4" fill="#1a10b0"/><rect x="320.8" y="5" width="1.3" height="6" fill="#1a10b0"/></g>
<g fill="none" stroke="#3e413d" shape-rendering="crispEdges"><path d="M346 13V4h12v9" stroke-width="1.6"/><path d="M348 7.500h8M348 10.500h8" stroke-width="1.4"/><rect x="342" y="13.5" width="20" height="9.5" stroke-width="1.8"/><rect x="345" y="17" width="14" height="2.5" fill="#3e413d" stroke="none"/></g>
<rect x="391" y="1" width="1" height="26" fill="#000" shape-rendering="crispEdges"/><rect x="392" y="1" width="1" height="26" fill="#787a76" shape-rendering="crispEdges"/>
<rect x="403.5" y="3.5" width="113" height="21" fill="#020808" stroke="#6262aa" shape-rendering="crispEdges"/>
<path d="M405.0 20.4L405.3 19.1L405.7 16.7L406.0 13.8L406.3 11.1L406.7 9.2L407.0 8.5L407.3 9.2L407.7 11.1L408.0 13.8L408.3 16.7L408.7 19.1L409.0 20.4L409.3 20.3L409.7 18.9L410.0 16.4L410.3 13.6L410.7 10.9L411.0 9.1L411.3 8.5L411.7 9.3L412.0 11.4L412.3 14.1L412.7 17.0L413.0 19.2L413.3 20.4L413.7 20.2L414.0 18.7" fill="none" stroke="#0d4f55" stroke-width="1.1"/>
<path d="M506.5 18.0L506.8 15.3L507.2 12.4L507.5 10.0L507.8 8.7L508.2 8.7L508.5 10.0L508.8 12.4L509.2 15.3L509.5 18.0L509.8 19.9L510.2 20.5L510.5 19.7L510.8 17.7L511.2 15.0L511.5 12.2L511.8 9.8L512.2 8.6L512.5 8.8L512.8 10.2L513.2 12.7L513.5 15.6L513.8 18.2L514.2 20.0L514.5 20.5L514.8 19.6L515.2 17.5L515.5 14.7" fill="none" stroke="#0d4f55" stroke-width="1.1"/>
<rect x="415.600" y="4.100" width="88.4" height="18.600" fill="#000" stroke="#ff6a0a" stroke-width="2.2"/>
<path d="M417.8 17.1L418.1 18.5L418.5 19.6L418.8 20.2L419.1 20.4L419.5 20.1L419.8 19.2L420.1 18.0L420.5 16.5L420.8 14.8L421.1 13.0L421.5 11.2L421.8 9.7L422.1 8.4L422.5 7.6L422.8 7.2L423.1 7.3L423.5 7.9L423.8 9.0L424.1 10.4L424.5 12.0L424.8 13.8L425.2 15.6L425.5 17.3L425.8 18.7L426.2 19.7L426.5 20.3L426.8 20.4L427.2 20.0L427.5 19.1L427.8 17.9L428.2 16.3L428.5 14.6L428.8 12.8L429.2 11.1L429.5 9.5L429.8 8.3L430.2 7.5L430.5 7.2L430.8 7.4L431.2 8.0L431.5 9.1L431.8 10.5L432.2 12.2L432.5 14.0L432.8 15.8L433.2 17.4L433.5 18.8L433.8 19.8L434.2 20.3L434.5 20.4L434.8 19.9L435.2 19.0L435.5 17.7L435.8 16.2L436.2 14.4L436.5 12.6L436.8 10.9L437.2 9.4L437.5 8.2L437.8 7.5L438.2 7.2L438.5 7.4L438.9 8.1L439.2 9.2L439.5 10.7L439.9 12.4L440.2 14.2L440.5 16.0L440.9 17.6L441.2 18.9L441.5 19.8L441.9 20.3L442.2 20.3L442.5 19.9L442.9 18.9L443.2 17.6L443.5 16.0L443.9 14.2L444.2 12.4L444.5 10.7L444.9 9.2L445.2 8.1L445.5 7.4L445.9 7.2L446.2 7.5L446.5 8.2L446.9 9.4L447.2 10.9L447.5 12.6L447.9 14.4L448.2 16.1L448.5 17.7L448.9 19.0L449.2 19.9L449.5 20.4L449.9 20.3L450.2 19.8L450.5 18.8L450.9 17.4L451.2 15.8L451.5 14.0L451.9 12.2L452.2 10.5L452.5 9.1L452.9 8.0L453.2 7.4L453.6 7.2L453.9 7.5L454.2 8.3L454.6 9.5L454.9 11.0L455.2 12.8L455.6 14.6L455.9 16.3L456.2 17.9L456.6 19.1L456.9 20.0L457.2 20.4L457.6 20.3L457.9 19.7L458.2 18.7L458.6 17.3L458.9 15.6L459.2 13.8L459.6 12.0L459.9 10.4L460.2 9.0L460.6 7.9L460.9 7.3L461.2 7.2L461.6 7.6L461.9 8.4L462.2 9.7L462.6 11.2L462.9 13.0L463.2 14.8L463.6 16.5L463.9 18.0L464.2 19.2L464.6 20.1L464.9 20.4L465.2 20.2L465.6 19.6L465.9 18.5L466.2 17.1L466.6 15.4L466.9 13.6L467.3 11.9L467.6 10.2L467.9 8.9L468.3 7.9L468.6 7.3L468.9 7.2L469.3 7.7L469.6 8.5L469.9 9.8L470.3 11.4L470.6 13.1L470.9 15.0L471.3 16.7L471.6 18.2L471.9 19.3L472.3 20.1L472.6 20.4L472.9 20.2L473.3 19.5L473.6 18.4L473.9 16.9L474.3 15.3L474.6 13.5L474.9 11.7L475.3 10.1L475.6 8.7L475.9 7.8L476.3 7.3L476.6 7.3L476.9 7.7L477.3 8.7L477.6 10.0L477.9 11.6L478.3 13.3L478.6 15.1L478.9 16.8L479.3 18.3L479.6 19.4L479.9 20.2L480.3 20.4L480.6 20.1L480.9 19.4L481.3 18.3L481.6 16.8L482.0 15.1L482.3 13.3L482.6 11.5L483.0 9.9L483.3 8.6L483.6 7.7L484.0 7.2L484.3 7.3L484.6 7.8L485.0 8.8L485.3 10.1L485.6 11.7L486.0 13.5L486.3 15.3L486.6 17.0L487.0 18.4L487.3 19.5L487.6 20.2L488.0 20.4L488.3 20.1L488.6 19.3L489.0 18.1L489.3 16.6L489.6 14.9L490.0 13.1L490.3 11.3L490.6 9.8L491.0 8.5L491.3 7.6L491.6 7.2L492.0 7.3L492.3 7.9L492.6 8.9L493.0 10.3L493.3 11.9L493.6 13.7L494.0 15.5L494.3 17.2L494.6 18.6L495.0 19.6L495.3 20.3L495.7 20.4L496.0 20.0L496.3 19.2L496.7 18.0L497.0 16.4L497.3 14.7L497.7 12.9L498.0 11.2L498.3 9.6L498.7 8.4L499.0 7.6L499.3 7.2L499.7 7.4L500.0 8.0L500.3 9.0L500.7 10.4L501.0 12.1L501.3 13.9L501.7 15.7L502.0 17.3" fill="none" stroke="#04f2ff" stroke-width="2.8" stroke-linejoin="round"/>
<rect x="521.5" y="3.5" width="21" height="21" fill="#000" stroke="#9a9a9a" shape-rendering="crispEdges"/>
<rect x="547" y="3" width="99" height="21" rx="8" ry="8" fill="#000"/>
<g shape-rendering="crispEdges"><rect x="16" y="457" width="18" height="2" fill="#ffff00"/>
<rect x="16" y="461" width="3" height="1" fill="#ffff00"/>
<rect x="20" y="461" width="3" height="1" fill="#ffff00"/>
<rect x="24" y="461" width="3" height="1" fill="#ffff00"/>
<rect x="28" y="461" width="3" height="1" fill="#ffff00"/>
<rect x="31" y="461" width="3" height="1" fill="#ffff00"/>
</g>
<circle cx="49.5" cy="464.5" r="9" fill="none" stroke="#5040b0" stroke-width="2.2" opacity=".5"/>
<circle cx="49.5" cy="464.5" r="9" fill="none" stroke="#f4001a" stroke-width="1.4"/>
<path d="M64.500 462.500h3v-4.500h4v4.500h3.500v-4.500h4v4.500h3" fill="none" stroke="#ffff00" stroke-width="1.3" shape-rendering="crispEdges"/>
<path d="M64.500 467.500h3v4h4v-4h3.500v4h4v-4h3" fill="none" stroke="#6a6ad0" stroke-width="1.3" shape-rendering="crispEdges"/>
<rect x="87" y="453" width="82" height="22" rx="10" ry="10" fill="#000"/>
<rect x="171" y="452" width="1" height="26" fill="#000" shape-rendering="crispEdges"/><rect x="172" y="452" width="1" height="26" fill="#787a76" shape-rendering="crispEdges"/>
<rect x="331" y="452" width="1" height="26" fill="#000" shape-rendering="crispEdges"/><rect x="332" y="452" width="1" height="26" fill="#787a76" shape-rendering="crispEdges"/>
<rect x="501" y="452" width="1" height="26" fill="#000" shape-rendering="crispEdges"/><rect x="502" y="452" width="1" height="26" fill="#787a76" shape-rendering="crispEdges"/>
<path d="M385 456.500h5l6.500 15.500h6" fill="none" stroke="#5aa0ff" stroke-width="2.2" stroke-linejoin="round"/>
<path d="M385 456.500h5l6.500 15.500h6" fill="none" stroke="#d8f0ff" stroke-width=".8" stroke-linejoin="round"/>
<rect x="405" y="453" width="78" height="22" rx="10" ry="10" fill="#000"/>
<rect x="513" y="453" width="130" height="22" rx="10" ry="10" fill="#000"/>
<g shape-rendering="crispEdges">
<rect x="656" y="0" width="1" height="480" fill="#b9b9b9"/>
<rect x="657" y="0" width="143" height="480" fill="#757575"/>
<rect x="657" y="0" width="143" height="1" fill="#a8a8a8"/>
<rect x="657" y="1" width="143" height="27" fill="#414541"/>
<rect x="777" y="3" width="21" height="21" fill="#ff3000"/>
<rect x="658" y="51" width="142" height="28" fill="#6f6f6f"/>
<rect x="658" y="51" width="142" height="1" fill="#868686"/>
<rect x="658" y="51" width="1" height="28" fill="#868686"/>
<rect x="658" y="78" width="142" height="1" fill="#5f5f5f"/>
<rect x="658" y="103" width="142" height="28" fill="#6f6f6f"/>
<rect x="658" y="103" width="142" height="1" fill="#868686"/>
<rect x="658" y="103" width="1" height="28" fill="#868686"/>
<rect x="658" y="130" width="142" height="1" fill="#5f5f5f"/>
<rect x="658" y="155" width="142" height="28" fill="#6f6f6f"/>
<rect x="658" y="155" width="142" height="1" fill="#868686"/>
<rect x="658" y="155" width="1" height="28" fill="#868686"/>
<rect x="658" y="182" width="142" height="1" fill="#5f5f5f"/>
<rect x="658" y="207" width="142" height="28" fill="#6f6f6f"/>
<rect x="658" y="207" width="142" height="1" fill="#868686"/>
<rect x="658" y="207" width="1" height="28" fill="#868686"/>
<rect x="658" y="234" width="142" height="1" fill="#5f5f5f"/>
<rect x="658" y="259" width="142" height="28" fill="#6f6f6f"/>
<rect x="658" y="259" width="142" height="1" fill="#868686"/>
<rect x="658" y="259" width="1" height="28" fill="#868686"/>
<rect x="658" y="286" width="142" height="1" fill="#5f5f5f"/>
<rect x="658" y="311" width="142" height="28" fill="#6f6f6f"/>
<rect x="658" y="311" width="142" height="1" fill="#868686"/>
<rect x="658" y="311" width="1" height="28" fill="#868686"/>
<rect x="658" y="338" width="142" height="1" fill="#5f5f5f"/>
<rect x="658" y="363" width="142" height="28" fill="#6f6f6f"/>
<rect x="658" y="363" width="142" height="1" fill="#868686"/>
<rect x="658" y="363" width="1" height="28" fill="#868686"/>
<rect x="658" y="390" width="142" height="1" fill="#5f5f5f"/>
<rect x="658" y="415" width="142" height="28" fill="#6f6f6f"/>
<rect x="658" y="415" width="142" height="1" fill="#868686"/>
<rect x="658" y="415" width="1" height="28" fill="#868686"/>
<rect x="658" y="442" width="142" height="1" fill="#5f5f5f"/>
</g>
<path d="M782 7.500L793 19.500M793 7.500L782 19.5" stroke="#fff" stroke-width="2.600" fill="none"/>
<path d="M782 7.500L793 19.500M793 7.500L782 19.5" stroke="#2e3436" stroke-width="1.2" fill="none"/>
<path d="M667 137v13l12.500 -6.500z" fill="#ff6a00"/>
<path d="M683.5 475.5q-5 0 -5 -5v-14q0 -5 5 -5h89q3 0 4 1.5" fill="none" stroke="#f2f2f2" stroke-width="1.2"/>
<path d="M776.5 453q1 1 1 3.500v14q0 5 -5 5h-89q-2.500 0 -4 -1.5" fill="none" stroke="#2b2b2b" stroke-width="1.2"/>
<defs><filter id="gs" x="0" y="0" width="800" height="480" filterUnits="userSpaceOnUse"><feOffset dx="0" dy="0"/></filter></defs>
<g filter="url(#gs)">
<text x="2.100" y="244.8" font-family="NanumGothic,Liberation Sans,sans-serif" font-weight="bold" font-size="14" fill="#0000ee" stroke="#0000ee" stroke-width=".5">1</text>
<text x="23.2" y="20.7" font-family="DejaVu Sans,Liberation Sans,sans-serif" font-size="19" fill="#ffff00" stroke="#ffff00" stroke-width=".8"><tspan textLength="14.3" lengthAdjust="spacingAndGlyphs">H</tspan><tspan x="38" font-size="16.2" textLength="64.5" lengthAdjust="spacingAndGlyphs">antek</tspan></text>
<text x="532" y="20.3" text-anchor="middle" font-family="Liberation Sans,Arial,sans-serif" font-size="18.5" fill="#d0ffff" stroke="#d0ffff" stroke-width=".7">W</text>
<text x="571.8" y="20.8" font-family="Liberation Sans,Arial,sans-serif" font-size="17.8" fill="#fff" stroke="#000" stroke-width=".35" textLength="49.5" lengthAdjust="spacingAndGlyphs">200ms</text>
<text x="15.5" y="473" font-family="Liberation Sans,Arial,sans-serif" font-size="12" fill="#f0f020" stroke="#555753" stroke-width=".25" textLength="17.3" lengthAdjust="spacingAndGlyphs">DC</text>
<text x="42.3" y="470" font-family="Liberation Sans,Arial,sans-serif" font-size="15.5" fill="#f4f428" stroke="#555753" stroke-width=".3" textLength="14.3" lengthAdjust="spacingAndGlyphs">20</text>
<text x="105" y="472" class="v" stroke="#000" stroke-width=".2" font-size="18" textLength="45.5" lengthAdjust="spacingAndGlyphs">5.00V</text>
<text x="353.5" y="471" class="v" font-size="17.5" textLength="25.5" lengthAdjust="spacingAndGlyphs">CH1</text>
<text x="421" y="471" class="v" stroke="#000" stroke-width=".2" font-size="18" textLength="45.7" lengthAdjust="spacingAndGlyphs">2.40V</text>
<text x="535.3" y="471" class="v" stroke="#000" stroke-width=".2" font-size="18" textLength="85" lengthAdjust="spacingAndGlyphs">0.00000Hz</text>
<text x="675.5" y="20" font-family="Liberation Sans,Arial,sans-serif" font-size="19.6" fill="#fff" stroke="#fff" stroke-width=".35" textLength="81.5" lengthAdjust="spacingAndGlyphs">Measure</text>
<text transform="translate(680.7 44.7) scale(1.12 1)" class="l" stroke="#757575" stroke-width=".3" font-size="18.4" letter-spacing="-0.760" word-spacing="-4.240">Frequency</text>
<text x="674.3" y="75" class="v" font-size="30.5" textLength="108" lengthAdjust="spacingAndGlyphs">2.053Hz</text>
<text transform="translate(680.7 96.7) scale(1.12 1)" class="l" stroke="#757575" stroke-width=".3" font-size="18.4" letter-spacing="-0.760" word-spacing="-4.240">Period</text>
<text x="671.5" y="127" class="v" font-size="30.5" textLength="113.5" lengthAdjust="spacingAndGlyphs">487.0ms</text>
<text transform="translate(680.7 148.7) scale(1.12 1)" class="l" stroke="#757575" stroke-width=".3" font-size="18.4" letter-spacing="-0.760" word-spacing="-4.240">Mean</text>
<text x="688" y="179" class="v" font-size="30.5" textLength="79" lengthAdjust="spacingAndGlyphs">8.00V</text>
<text transform="translate(680.7 200.7) scale(1.12 1)" class="l" stroke="#757575" stroke-width=".3" font-size="18.4" letter-spacing="-0.760" word-spacing="-4.240">Pk-Pk</text>
<text x="688" y="231" class="v" font-size="30.5" textLength="79" lengthAdjust="spacingAndGlyphs">9.20V</text>
<text transform="translate(680.7 252.7) scale(1.12 1)" class="l" stroke="#757575" stroke-width=".3" font-size="18.4" letter-spacing="-0.760" word-spacing="-4.240">Minimum</text>
<text x="688" y="283" class="v" font-size="30.5" textLength="79" lengthAdjust="spacingAndGlyphs">3.80V</text>
<text transform="translate(680.7 304.7) scale(1.12 1)" class="l" stroke="#757575" stroke-width=".3" font-size="18.4" letter-spacing="-0.760" word-spacing="-4.240">Maximum</text>
<text x="690.5" y="335" class="v" font-size="30.5" textLength="76.5" lengthAdjust="spacingAndGlyphs">13.0V</text>
<text transform="translate(680.7 356.7) scale(1.12 1)" class="l" stroke="#757575" stroke-width=".3" font-size="18.4" letter-spacing="-0.760" word-spacing="-4.240">-Pulse Width</text>
<text x="671.2" y="387" class="v" font-size="30.5" textLength="113.5" lengthAdjust="spacingAndGlyphs">255.0ms</text>
<text transform="translate(680.7 408.7) scale(1.12 1)" class="l" stroke="#757575" stroke-width=".3" font-size="18.4" letter-spacing="-0.760" word-spacing="-4.240">Rise Time</text>
<text x="671.2" y="439" class="v" font-size="30.5" textLength="113.5" lengthAdjust="spacingAndGlyphs">5.000ms</text>
<text transform="translate(698.4 470.700) scale(1.12 1)" class="l" stroke="#757575" stroke-width=".3" font-size="18.4" letter-spacing="-0.760" style="fill:#fff">Modify</text>
</g></svg></body></html>
